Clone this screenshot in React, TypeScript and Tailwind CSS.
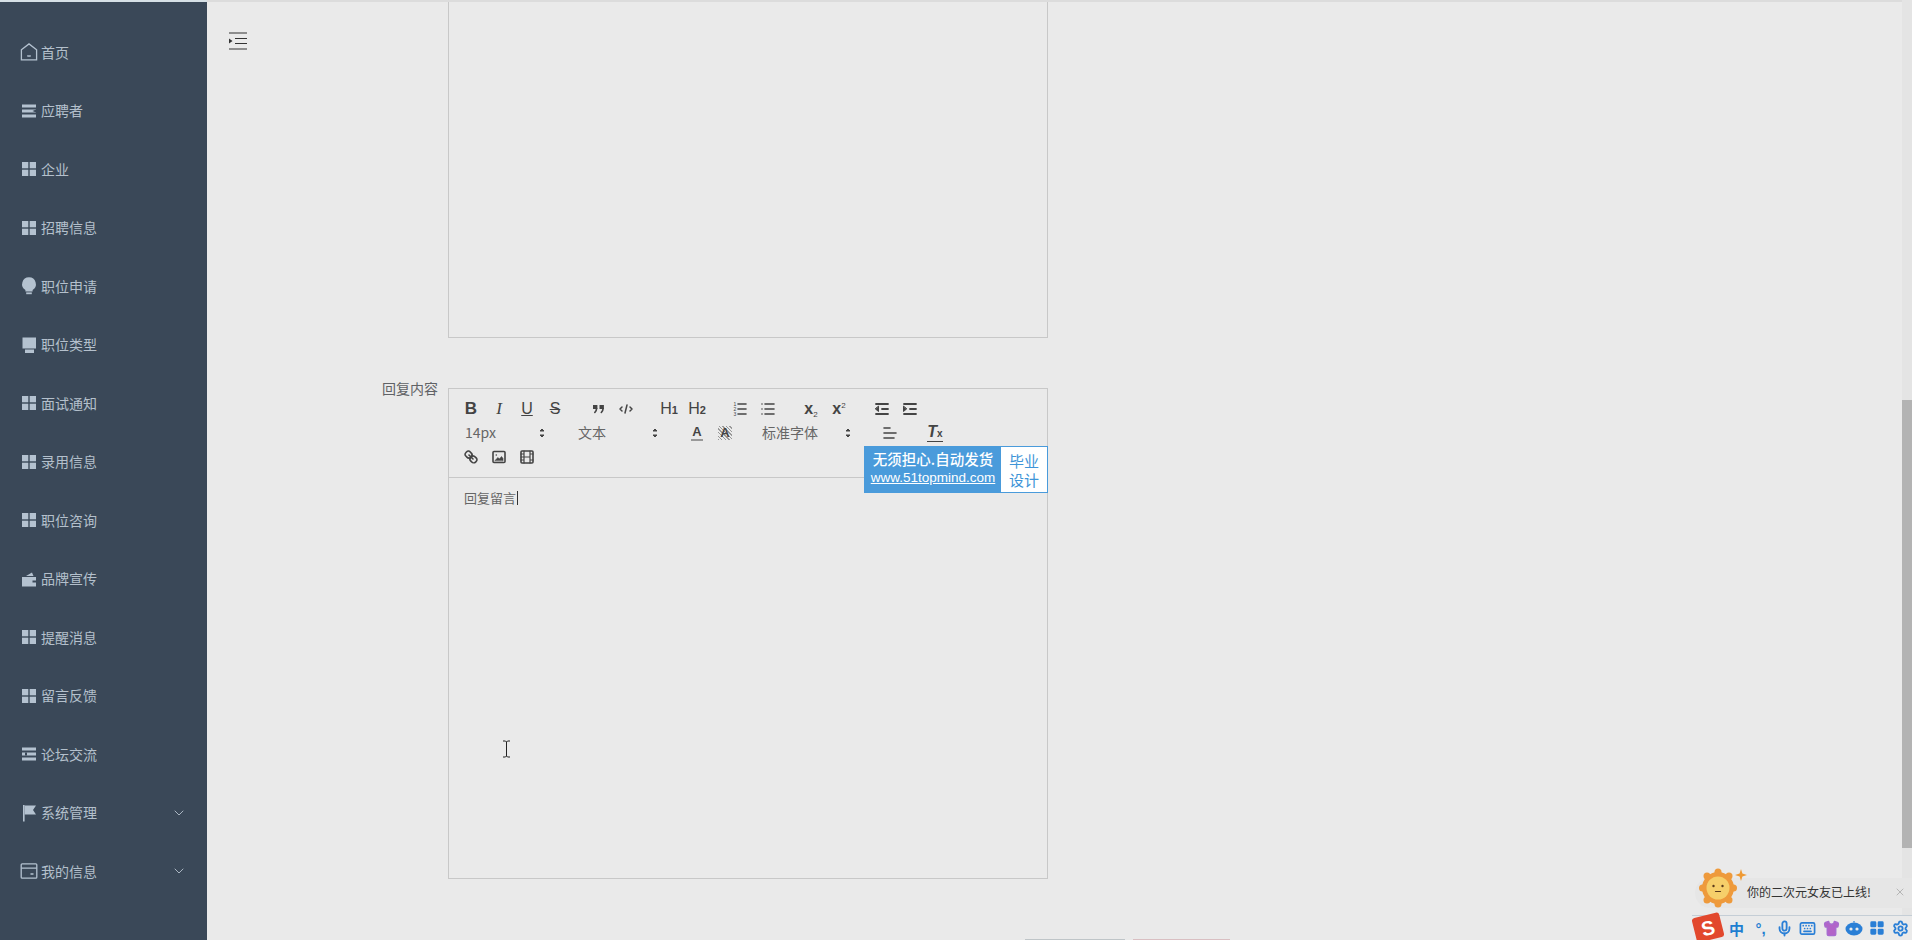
import React from 'react';
import { ChevronDown, Mic, Keyboard, Shirt, LayoutGrid, Settings, X } from 'lucide-react';

type IconKind = 'home' | 'bars' | 'grid' | 'bulb' | 'platform' | 'wallet' | 'flag' | 'card';

const MENU: { label: string; icon: IconKind; arrow?: boolean; bars2?: boolean }[] = [
  { label: '首页', icon: 'home' },
  { label: '应聘者', icon: 'bars' },
  { label: '企业', icon: 'grid' },
  { label: '招聘信息', icon: 'grid' },
  { label: '职位申请', icon: 'bulb' },
  { label: '职位类型', icon: 'platform' },
  { label: '面试通知', icon: 'grid' },
  { label: '录用信息', icon: 'grid' },
  { label: '职位咨询', icon: 'grid' },
  { label: '品牌宣传', icon: 'wallet' },
  { label: '提醒消息', icon: 'grid' },
  { label: '留言反馈', icon: 'grid' },
  { label: '论坛交流', icon: 'bars', bars2: true },
  { label: '系统管理', icon: 'flag', arrow: true },
  { label: '我的信息', icon: 'card', arrow: true },
];

const MenuIcon = ({ kind, flip }: { kind: IconKind; flip?: boolean }) => {
  const c = '#b4c2d0';
  return (
    <svg width="18" height="18" viewBox="0 0 18 18" className="shrink-0">
      {kind === 'home' && (
        <g fill="none" stroke={c} strokeWidth="1.3">
          <path d="M1.4 6.8 9 .9l7.6 5.9v10H1.4z" />
          <path d="M7.3 12.6c1 .7 2.4.7 3.4 0" />
        </g>
      )}
      {kind === 'bars' && (
        <g fill={c}>
          <rect x="2" y="2.5" width="14" height="3" />
          <rect x="2" y="7.5" width="14" height="3" />
          <rect x="2" y="12.5" width="14" height="3" />
          {flip ? <rect x="5" y="7.5" width="2" height="3" fill="#3a4858" /> : <path d="M12.5 9l3.5-1.5v3z" fill="#3a4858" />}
        </g>
      )}
      {kind === 'grid' && (
        <g fill={c}>
          <rect x="2" y="2" width="6.3" height="6.3" />
          <rect x="9.7" y="2" width="6.3" height="6.3" />
          <rect x="2" y="9.7" width="6.3" height="6.3" />
          <rect x="9.7" y="9.7" width="6.3" height="6.3" />
        </g>
      )}
      {kind === 'bulb' && (
        <g fill={c}>
          <path d="M9 .3a6.8 6.8 0 0 1 3.6 12.6V14.4H5.4v-1.5A6.8 6.8 0 0 1 9 .3z" />
          <rect x="6.2" y="15.4" width="5.6" height="1.8" />
        </g>
      )}
      {kind === 'platform' && (
        <g fill={c}>
          <path d="M2.5 1.5h13.5v11H2.5z" />
          <path d="M5 13.5h9v3.5H5z" />
        </g>
      )}
      {kind === 'wallet' && (
        <g fill={c}>
          <path d="M2 7h14v9.5H2z" />
          <path d="M6 6l6-3.5L13.5 6z" />
          <rect x="12.5" y="10.5" width="3.5" height="2" fill="#3a4858" />
        </g>
      )}
      {kind === 'flag' && (
        <g fill={c}>
          <rect x="3" y="1" width="1.6" height="16.5" />
          <path d="M4.6 1.5H16l-3 4.5 3 4.5H4.6z" />
        </g>
      )}
      {kind === 'card' && (
        <g fill="none" stroke={c} strokeWidth="1.3">
          <rect x="1.2" y="1.8" width="15.6" height="14.4" rx="1" />
          <path d="M1.2 6.2h15.6M10.5 12h3" />
        </g>
      )}
    </svg>
  );
};

// toolbar button, 28x24 like the quill snow theme
const Btn = ({ children }: { children: React.ReactNode }) => (
  <span className="flex h-6 w-7 items-center justify-center text-[#444]">{children}</span>
);

const Ic = ({ children }: { children: React.ReactNode }) => (
  <svg width="18" height="18" viewBox="0 0 18 18" fill="none" stroke="#444" strokeWidth="1.6" strokeLinecap="round" strokeLinejoin="round">
    {children}
  </svg>
);

const Group = ({ children }: { children: React.ReactNode }) => <span className="mr-[15px] flex">{children}</span>;

const Picker = ({ label, width }: { label: string; width: string }) => (
  <span className={`mr-[15px] flex h-6 items-center justify-between pr-1 pl-2 text-[14px] leading-[22px] text-[#666] ${width}`}>
    <span className="-mt-[2px]">{label}</span>
    <svg width="18" height="18" viewBox="0 0 18 18" fill="#444" stroke="#444">
      <path d="M7 7l2-2 2 2zM7 11l2 2 2-2z" />
    </svg>
  </span>
);

const latin = 'font-["Liberation_Sans",sans-serif]';

const Toolbar = () => (
  <div className="border-b border-[#c8c8c8] p-2">
    <div className="flex h-6">
      <Group>
        <Btn><span className={`${latin} text-[17px] font-bold`}>B</span></Btn>
        <Btn><span className='font-["Liberation_Serif",serif] text-[17px] italic'>I</span></Btn>
        <Btn><span className={`${latin} text-[16px] underline`}>U</span></Btn>
        <Btn><span className={`${latin} text-[16px] line-through`}>S</span></Btn>
      </Group>
      <Group>
        <Btn>
          <Ic>
            <g fill="#444" stroke="none">
              <rect x="4" y="5" width="4.4" height="4" />
              <rect x="10.5" y="5" width="4.4" height="4" />
            </g>
            <path d="M7.6 8.5C7.6 10.5 5.8 12.5 5.8 12.5M14.1 8.5c0 2-1.8 4-1.8 4" strokeWidth="1.6" />
          </Ic>
        </Btn>
        <Btn>
          <Ic>
            <path d="M5 7 3 9l2 2M13 7l2 2-2 2M10 5l-2 8" strokeWidth="1.5" />
          </Ic>
        </Btn>
      </Group>
      <Group>
        <Btn><span className={`${latin} text-[16px]`}>H<span className="text-[11px] font-bold">1</span></span></Btn>
        <Btn><span className={`${latin} text-[16px]`}>H<span className="text-[11px] font-bold">2</span></span></Btn>
      </Group>
      <Group>
        <Btn>
          <Ic>
            <path d="M7 4h8M7 9h8M7 14h8" />
            <g fill="#444" stroke="none" fontSize="5" fontFamily="Liberation Sans, sans-serif">
              <text x="2.5" y="6">1</text>
              <text x="2.5" y="11">2</text>
              <text x="2.5" y="16">3</text>
            </g>
          </Ic>
        </Btn>
        <Btn>
          <Ic>
            <path d="M6 4h9M6 9h9M6 14h9M3 4h.01M3 9h.01M3 14h.01" />
          </Ic>
        </Btn>
      </Group>
      <Group>
        <Btn><span className={`${latin} text-[16px] font-bold`}>x<span className="align-[-3px] text-[8px] font-normal">2</span></span></Btn>
        <Btn><span className={`${latin} text-[16px] font-bold`}>x<span className="align-[6px] text-[8px] font-normal">2</span></span></Btn>
      </Group>
      <Group>
        <Btn>
          <Ic>
            <path d="M3 4h12M3 14h12M9 9h6" strokeWidth="1.8" />
            <path d="M5.5 6.5v5L2.5 9z" fill="#444" strokeWidth="1" />
          </Ic>
        </Btn>
        <Btn>
          <Ic>
            <path d="M3 4h12M3 14h12M9 9h6" strokeWidth="1.8" />
            <path d="M2.5 6.5v5l3-2.5z" fill="#444" strokeWidth="1" />
          </Ic>
        </Btn>
      </Group>
    </div>
    <div className="flex h-6">
      <Picker label="14px" width="w-[98px]" />
      <Picker label="文本" width="w-[98px]" />
      <Group>
        <Btn>
          <span className={`${latin} border-b-2 border-[#999] px-[1px] text-[13px] leading-[14px] font-bold`}>A</span>
        </Btn>
        <Btn>
          <span className={`${latin} bg-[repeating-linear-gradient(45deg,#999_0,#999_1px,#eaeaea_1px,#eaeaea_2.5px)] px-[2px] text-[13px] leading-[14px] font-bold`}>A</span>
        </Btn>
      </Group>
      <Picker label="标准字体" width="w-[107px]" />
      <span className="mr-[17px] flex">
        <Btn>
          <Ic>
            <path d="M3 4h6M3 9h12M3 14h10" />
          </Ic>
        </Btn>
      </span>
      <Btn>
        <span className={`${latin} border-b border-[#444] text-[16px] leading-[15px] font-bold italic`}>
          T<span className="text-[10px] not-italic">x</span>
        </span>
      </Btn>
    </div>
    <div className="flex h-6">
      <Btn>
        <Ic>
          <path d="M7 7l4 4" />
          <path d="M8.9 4.6a3.5 3.5 0 0 1 .4 4.7 3.5 3.5 0 0 1-4.7-.4C3.2 7.5 2 6.4 4.2 4.2S7.5 3.2 8.9 4.6z" />
          <path d="M13.4 9.1a3.5 3.5 0 0 0-4.7-.4 3.5 3.5 0 0 0 .4 4.7c1.4 1.4 2.5 2.5 4.7.4s1-3.3-.4-4.7z" />
        </Ic>
      </Btn>
      <Btn>
        <Ic>
          <rect x="3" y="3.5" width="12" height="11" rx="1" />
          <path d="M5 12.5l3-3 1.5 1.5 2-2.5 1.5 2v2z" fill="#444" strokeWidth="0.6" />
          <circle cx="6.3" cy="7" r="0.8" fill="#444" stroke="none" />
        </Ic>
      </Btn>
      <Btn>
        <Ic>
          <rect x="3" y="3" width="12" height="12" rx="1" />
          <path d="M6 3v12M12 3v12M6 9h6M3 6h3M3 9h3M3 12h3M12 6h3M12 12h3" strokeWidth="1.2" />
        </Ic>
      </Btn>
    </div>
  </div>
);

const Sun = () => (
  <svg width="52" height="42" viewBox="0 0 52 42">
    <circle cx="19" cy="22" r="16" fill="#ee9a3c" />
    <g fill="#ee9a3c">
      <circle cx="19" cy="6" r="3.5" />
      <circle cx="8" cy="10" r="3.5" />
      <circle cx="30" cy="10" r="3.5" />
      <circle cx="3.5" cy="22" r="3.5" />
      <circle cx="34.5" cy="22" r="3.5" />
      <circle cx="8" cy="34" r="3.5" />
      <circle cx="30" cy="34" r="3.5" />
      <circle cx="19" cy="38" r="3.5" />
    </g>
    <circle cx="19" cy="22" r="11.5" fill="#f6cf6a" />
    <circle cx="14.5" cy="20" r="1.2" fill="#5a3a1c" />
    <circle cx="23.5" cy="20" r="1.2" fill="#5a3a1c" />
    <path d="M16.5 25.5h5" stroke="#5a3a1c" strokeWidth="1.2" strokeLinecap="round" />
    <path d="M42 3l1.4 4.6L48 9l-4.6 1.4L42 15l-1.4-4.6L36 9l4.6-1.4z" fill="#ef9a34" />
  </svg>
);

const ImeBar = () => (
  <div className="flex h-[25px] items-center border-t border-[#c5ced6] bg-[#eaeaea] pl-[33px]">
    <span className='w-6 text-center font-["Noto_Sans_CJK_SC",sans-serif] text-[15px] leading-none font-bold text-[#1f7fd1]'>中</span>
    <span className={`${latin} w-[26px] text-center text-[15px] leading-none font-bold text-[#1f7fd1]`}>°,</span>
    <span className="flex w-6 justify-center"><Mic size={17} strokeWidth={2.6} color="#2a7fd6" /></span>
    <span className="flex w-6 justify-center"><Keyboard size={17} strokeWidth={2.4} color="#2a7fd6" /></span>
    <span className="flex w-6 justify-center"><Shirt size={17} fill="#b264c8" color="#a76cd0" /></span>
    <span className="flex w-6 justify-center">
      <svg width="18" height="16" viewBox="0 0 18 16">
        <path d="M9 2.5V1" stroke="#2a7fd6" strokeWidth="1.2" />
        <ellipse cx="9" cy="9" rx="8.5" ry="6.5" fill="#2a7fd6" />
        <circle cx="6" cy="9" r="1.6" fill="#eaeaea" />
        <circle cx="12" cy="9" r="1.6" fill="#eaeaea" />
      </svg>
    </span>
    <span className="flex w-6 justify-center"><LayoutGrid size={16} fill="#2a7fd6" color="#2a7fd6" /></span>
    <span className="flex w-6 justify-center"><Settings size={17} strokeWidth={2.6} color="#2a7fd6" /></span>
  </div>
);

export default function App() {
  return (
    <div className='relative flex h-screen overflow-hidden bg-[#eaeaea] font-["Noto_Sans_CJK_SC",sans-serif]'>
      <aside className="w-[207px] shrink-0 border-t-2 border-[#d6e0e6] bg-[#3a4858] pt-[21px]">
        {MENU.map(item => (
          <div key={item.label} className="flex h-[58.5px] items-center px-[20px] text-[14px] text-[#b4c0cc]">
            <MenuIcon kind={item.icon} flip={item.bars2} />
            <span className="ml-[3px] flex-1">{item.label}</span>
            {item.arrow && <ChevronDown size={16} color="#aab6c2" strokeWidth={1.5} />}
          </div>
        ))}
      </aside>

      <main className="relative flex-1 border-t-2 border-[#dcdcdc]">
        <div className="ml-[241px] h-[336px] w-[600px] border-x border-b border-[#c8c8c8]" />

        <div className="mt-[50px] flex">
          <label className="w-[241px] pr-[10px] text-right text-[14px] leading-[0px] text-[#606266]">回复内容</label>
          <div className="relative h-[491px] w-[600px] border border-[#c8c8c8]">
            <Toolbar />
            <div className="px-[15px] py-[11px] text-[13px] leading-[18.5px] text-[#666]">
              回复留言<span className="ml-px inline-block h-[14px] w-px bg-[#333] align-[-2px]" />
            </div>

            <div className="absolute top-[57px] -right-px flex h-[47px] w-[184px] bg-[#4a9bdb] p-px text-white">
              <div className="flex-1 text-center leading-none">
                <div className="mt-[5px] text-[14.5px] font-medium">无须担心.自动发货</div>
                <div className={`${latin} mt-[4px] text-[13.5px] font-normal underline`}>www.51topmind.com</div>
              </div>
              <div className="w-[46px] bg-white pt-[4px] text-center text-[15px] leading-[19px] text-[#3f95d8]">
                <div>毕业</div>
                <div>设计</div>
              </div>
            </div>
          </div>
        </div>

        {/* sidebar toggle, sits above the scrolled content */}
        <svg className="absolute top-[29px] left-[21px]" width="20" height="20" viewBox="0 0 20 20">
          <path d="M1 2h18M7 7.5h12M7 12.5h12M1 18h18" stroke="#333" strokeWidth="1.2" />
          <path d="M1 7.5v5L4.5 10z" fill="#333" />
        </svg>
      </main>

      {/* text cursor */}
      <svg className="absolute top-[740px] left-[502px]" width="9" height="18" viewBox="0 0 9 18">
        <path d="M1 1h2.5l1 1 1-1H8M4.5 2v14M1 17h2.5l1-1 1 1H8" fill="none" stroke="#222" strokeWidth="1" />
      </svg>

      {/* scrollbar */}
      <div className="absolute top-0 right-0 h-full w-[10px] bg-[#e4e4e4]">
        <div className="mt-[400px] h-[448px] bg-[#b3b3b3]" />
      </div>

      {/* bits of the taskbar peeking through */}
      <div className="absolute bottom-0 left-[1025px] flex gap-2">
        <div className="h-px w-[100px] bg-[#bfc5c8]" />
        <div className="h-px w-[97px] bg-[#d9bfc2]" />
      </div>

      {/* input method toast */}
      <div className="absolute right-0 bottom-0 w-[220px]">
        <div className="relative flex h-[40px] items-center">
          <div className="absolute top-[3px] right-0 left-[3px] h-[30px] rounded-l-[15px] bg-[#e6e6e6]" />
          <span className="absolute -top-[9px] left-[7px]"><Sun /></span>
          <span className="absolute top-[7px] left-[55px] text-[12px] leading-[20px] text-[#333]">你的二次元女友已上线!</span>
          <X className="absolute top-[11px] right-[6px]" size={12} color="#b5b5b5" />
        </div>
        <ImeBar />
        <span className={`${latin} absolute bottom-0 left-[2px] flex h-[25px] w-[28px] -rotate-[14deg] items-center justify-center rounded-[3px] bg-[#e2482d] text-[20px] leading-none font-bold text-white`}>S</span>
      </div>
    </div>
  );
}
